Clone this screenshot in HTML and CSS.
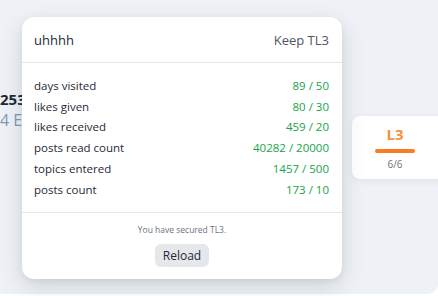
FILE: index.html
```html
<!DOCTYPE html>
<html lang="en">
<head>
    <meta charset="UTF-8">
    <title>Trust Level</title>
    <link rel="stylesheet" href="styles.css">
</head>
<body>
    <div class="panel">
        <div class="stats">
            <div class="stat-number">2530</div>
            <div class="stat-label">4 Edits</div>
        </div>

        <div class="level-card">
            <div class="level-name">L3</div>
            <div class="level-bar"></div>
            <div class="level-count">6/6</div>
        </div>

        <div class="popup">
            <div class="popup-header">
                <span class="user">uhhhh</span>
                <span class="goal">Keep TL3</span>
            </div>
            <div class="popup-body">
                <div class="req-row"><span>days visited</span><span class="req-value">89 / 50</span></div>
                <div class="req-row"><span>likes given</span><span class="req-value">80 / 30</span></div>
                <div class="req-row"><span>likes received</span><span class="req-value">459 / 20</span></div>
                <div class="req-row"><span>posts read count</span><span class="req-value">40282 / 20000</span></div>
                <div class="req-row"><span>topics entered</span><span class="req-value">1457 / 500</span></div>
                <div class="req-row"><span>posts count</span><span class="req-value">173 / 10</span></div>
            </div>
            <div class="popup-footer">
                <div class="status">You have secured TL3.</div>
                <button class="btn-reload">Reload</button>
            </div>
        </div>
    </div>
</body>
</html>
```

FILE: styles.css
```css
* {
    margin: 0;
    padding: 0;
    box-sizing: border-box;
}

body {
    font-family: 'Open Sans', 'Noto Sans', sans-serif;
    background: #ffffff;
    width: 438px;
    height: 296px;
    overflow: hidden;
}

.panel {
    position: relative;
    margin: -20px 0 0 -6px;
    width: 444px;
    height: 314px;
    background: #eef2f6;
    border-radius: 10px;
    padding: 109px 0 0 6px;
    display: flex;
    justify-content: space-between;
    align-items: flex-start;
}

/* only the left edge peeks out from under the popup */
.stats {
    width: 22px;
    overflow: hidden;
    white-space: nowrap;
    line-height: 21px;
}

.stat-number {
    font-size: 15px;
    font-weight: bold;
    color: #1f2937;
}

.stat-label {
    font-size: 16px;
    color: #7f9bb9;
}

.level-card {
    margin-top: 27px;
    margin-right: -52px;
    width: 138px;
    height: 63px;
    background: white;
    border-radius: 8px 0 0 8px;
    box-shadow: 0 2px 8px rgba(0,0,0,0.06);
    display: flex;
    flex-direction: column;
    align-items: center;
    padding: 8px 52px 0 0;
}

.level-name {
    font-size: 15px;
    font-weight: bold;
    color: #f7913d;
    line-height: 20px;
}

.level-bar {
    width: 40px;
    height: 4px;
    border-radius: 2px;
    background: #f97c1e;
    margin: 5px 0 4px;
}

.level-count {
    font-size: 10px;
    color: #6b7280;
    line-height: 14px;
}

.popup {
    position: absolute;
    left: 28px;
    top: 37px;
    width: 320px;
    background: white;
    border-radius: 12px;
    box-shadow: 0 8px 24px rgba(0,0,0,0.13), 0 2px 6px rgba(0,0,0,0.06);
}

.popup-header {
    display: flex;
    justify-content: space-between;
    align-items: center;
    padding: 0 13px 0 12px;
    height: 46px;
    font-size: 13px;
    line-height: 18px;
    border-bottom: 1px solid #e5e7eb;
}

.user {
    color: #1f2937;
}

.goal {
    color: #4b5563;
}

.popup-body {
    padding: 13px 13px 12px 12px;
    font-size: 11.5px;
    color: #1f2937;
}

.req-row {
    display: flex;
    justify-content: space-between;
    line-height: 20.7px;
}

.req-value {
    color: #16a34a;
}

.popup-footer {
    border-top: 1px solid #e5e7eb;
    text-align: center;
    padding: 10px 0 12px;
}

.status {
    font-size: 8.5px;
    color: #6b7280;
    line-height: 14px;
    margin-bottom: 6px;
}

.btn-reload {
    font-family: inherit;
    font-size: 12px;
    color: #1f2937;
    background: #e5e7eb;
    border: none;
    border-radius: 6px;
    height: 23px;
    padding: 0 8px;
}
```
